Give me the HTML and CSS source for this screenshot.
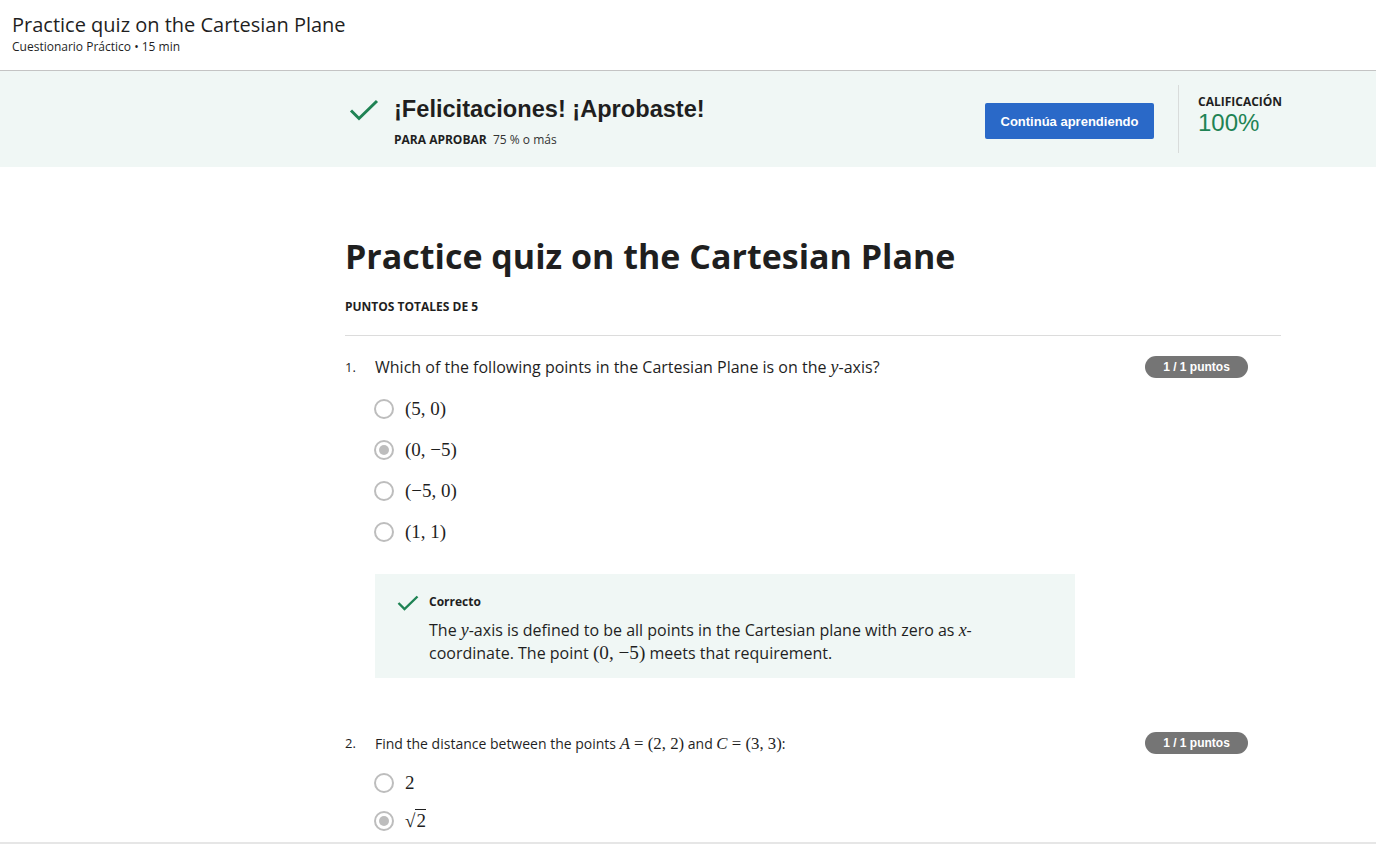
FILE: index.html
```html
<!DOCTYPE html>
<html lang="es">
<head>
<meta charset="utf-8">
<title>Practice quiz on the Cartesian Plane</title>
<link rel="stylesheet" href="styles.css">
</head>
<body>
<header class="top">
  <div class="top-title">Practice quiz on the Cartesian Plane</div>
  <div class="top-sub">Cuestionario Práctico • 15 min</div>
</header>

<section class="banner">
  <div class="banner-inner">
    <div class="banner-left">
      <svg class="banner-check" width="30" height="22" viewBox="0 0 30 22"><path d="M2 11.5 L10 19.5 L28 2" fill="none" stroke="#1f8354" stroke-width="3"/></svg>
      <div class="banner-text">
        <div class="banner-title">¡Felicitaciones! ¡Aprobaste!</div>
        <div class="banner-pass"><b>PARA APROBAR</b>&nbsp; 75 % o más</div>
      </div>
    </div>
    <button class="btn-primary">Continúa aprendiendo</button>
    <div class="grade">
      <div class="grade-label">CALIFICACIÓN</div>
      <div class="grade-value">100%</div>
    </div>
  </div>
</section>

<main class="content">
  <h1 class="quiz-title">Practice quiz on the Cartesian Plane</h1>
  <div class="total">PUNTOS TOTALES DE 5</div>
  <hr class="divider">

  <div class="question">
    <div class="q-head">
      <span class="q-num">1.</span>
      <span class="q-text">Which of the following points in the Cartesian Plane is on the <i class="m">y</i>-axis?</span>
      <span class="badge">1 / 1 puntos</span>
    </div>
    <ul class="options">
      <li><span class="radio"></span><span class="math">(5, 0)</span></li>
      <li><span class="radio checked"></span><span class="math">(0, −5)</span></li>
      <li><span class="radio"></span><span class="math">(−5, 0)</span></li>
      <li><span class="radio"></span><span class="math">(1, 1)</span></li>
    </ul>
    <div class="feedback">
      <svg class="fb-check" width="22" height="16" viewBox="0 0 22 16"><path d="M1.5 8 L7.5 14 L20.5 1.5" fill="none" stroke="#1f8354" stroke-width="2.4"/></svg>
      <div class="fb-body">
        <div class="fb-label">Correcto</div>
        <p class="fb-text">The <i class="m">y</i>-axis is defined to be all points in the Cartesian plane with zero as <i class="m">x</i>-coordinate. The point <span class="math-in">(0, −5)</span> meets that requirement.</p>
      </div>
    </div>
  </div>

  <div class="question q2">
    <div class="q-head">
      <span class="q-num">2.</span>
      <span class="q-text small">Find the distance between the points <span class="math-in"><i>A</i> = (2, 2)</span> and <span class="math-in"><i>C</i> = (3, 3)</span>:</span>
      <span class="badge">1 / 1 puntos</span>
    </div>
    <ul class="options">
      <li><span class="radio"></span><span class="math">2</span></li>
      <li><span class="radio checked"></span><span class="math">√<span class="sqrt">2</span></span></li>
    </ul>
  </div>
</main>
</body>
</html>
```

FILE: styles.css
```css
* { box-sizing: border-box; }
html, body { margin: 0; padding: 0; }
body {
  font-family: "Open Sans", "Noto Sans", sans-serif;
  color: #1f1f1f;
  background: #fff;
  width: 1376px;
  height: 844px;
  overflow: hidden;
  border-bottom: 2px solid #e6e6e6;
}

.top {
  height: 71px;
  padding: 12px 12px 0;
  border-bottom: 1px solid #c4c4c4;
}
.top-title { font-size: 20px; line-height: 26px; color: #1f1f1f; }
.top-sub { font-size: 12px; line-height: 16px; color: #1f1f1f; margin-top: 1px; }

.banner {
  background: #f0f7f5;
  height: 96px;
}
.banner-inner {
  display: flex;
  align-items: flex-start;
  padding-left: 349px;
  height: 100%;
}
.banner-left { display: flex; align-items: flex-start; width: 636px; padding-top: 25px; }
.banner-check { margin-top: 3px; }
.banner-text { margin-left: 15px; }
.banner-title {
  font-family: "Liberation Sans", Arial, sans-serif;
  font-weight: bold;
  font-size: 23.6px;
  line-height: 26px;
  color: #1f1f1f;
}
.banner-pass { font-size: 12px; line-height: 16px; margin-top: 10px; color: #333; }
.banner-pass b { color: #1f1f1f; font-weight: 700; }

.btn-primary {
  margin-top: 32px;
  width: 169px;
  height: 36px;
  border: none;
  border-radius: 2px;
  background: #2a69c8;
  color: #fff;
  font-family: "Liberation Sans", Arial, sans-serif;
  font-weight: bold;
  font-size: 13px;
  padding: 0;
}
.grade {
  margin-left: 24px;
  margin-top: 14px;
  height: 68px;
  border-left: 1px solid #d9dcdb;
  padding-left: 19px;
  padding-top: 10px;
}
.grade-label { font-size: 12px; font-weight: 700; line-height: 14px; color: #1f1f1f; }
.grade-value {
  font-family: "Liberation Sans", Arial, sans-serif;
  font-size: 24px;
  line-height: 28px;
  color: #1f8354;
  margin-top: 0;
}

.content { width: 936px; margin-left: 345px; padding-top: 68px; }
.quiz-title {
  margin: 0;
  font-size: 34px;
  line-height: 42px;
  font-weight: 700;
  color: #1f1f1f;
}
.total { font-size: 12px; font-weight: 700; margin-top: 22px; line-height: 16px; }
.divider { border: none; border-top: 1px solid #dcdcdc; margin: 20px 0 0; }

.question { padding-top: 20px; }
.q-head { display: flex; align-items: center; height: 22px; }
.q-num { width: 30px; font-size: 13px; color: #1f1f1f; }
.q-text { flex: 1; font-size: 16px; color: #1f1f1f; }
.q-text.small { font-size: 14px; }
.m { font-family: "Liberation Serif", "DejaVu Serif", serif; font-style: italic; font-size: 1.12em; line-height: 1; }
.badge {
  width: 103px;
  height: 22px;
  margin-right: 33px;
  border-radius: 11px;
  background: #757575;
  color: #fff;
  font-family: "Liberation Sans", Arial, sans-serif;
  font-weight: bold;
  font-size: 12px;
  display: flex;
  align-items: center;
  justify-content: center;
}

.options { list-style: none; margin: 10px 0 0 29px; padding: 0; }
.options li { display: flex; align-items: center; height: 41px; }
.radio {
  width: 20px;
  height: 20px;
  border: 2px solid #bdbdbd;
  border-radius: 50%;
  margin-right: 11px;
  display: flex;
  align-items: center;
  justify-content: center;
}
.radio.checked::after {
  content: "";
  width: 10px;
  height: 10px;
  border-radius: 50%;
  background: #bdbdbd;
}
.math {
  font-family: "Liberation Serif", "DejaVu Serif", serif;
  font-size: 19px;
  color: #1f1f1f;
}
.math-in { font-family: "Liberation Serif", "DejaVu Serif", serif; font-size: 1.2em; line-height: 1; }
.sqrt { border-top: 1px solid #1f1f1f; padding-left: 1px; }

.feedback {
  margin: 22px 0 0 30px;
  width: 700px;
  background: #f0f7f5;
  display: flex;
  padding: 20px 20px 13px 22px;
}
.fb-check { margin-top: 1px; flex: none; }
.fb-body { margin-left: 10px; }
.fb-label { font-size: 12px; font-weight: 700; line-height: 16px; }
.fb-text { margin: 9px 0 0; font-size: 16px; line-height: 23px; width: 570px; color: #1f1f1f; }

.q2 { padding-top: 54px; }
.q2 .options { margin-top: 10px; }
.q2 .options li { height: 38px; }
```
